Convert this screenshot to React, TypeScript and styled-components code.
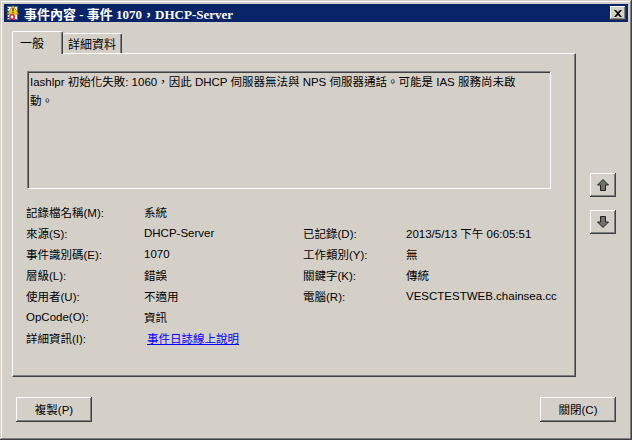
import React from "react";
import styled, { createGlobalStyle } from "styled-components";

const Global = createGlobalStyle`
  html, body { margin: 0; padding: 0; background: #d4d0c8; }
  * { box-sizing: border-box; }
`;

const Window = styled.div`
  width: 632px;
  height: 440px;
  padding: 4px;
  background: #d4d0c8;
  box-shadow: inset -1px -1px #404040, inset 1px 1px #d4d0c8,
    inset -2px -2px #808080, inset 2px 2px #ffffff;
  display: flex;
  flex-direction: column;
  font-family: "Liberation Sans", "Noto Sans CJK TC", sans-serif;
  font-size: 11.5px;
  color: #000;
`;

const TitleBar = styled.div`
  height: 18px;
  background: #0a246a;
  display: flex;
  align-items: center;
  padding: 0 2px 0 1px;
`;

const TitleText = styled.div`
  flex: 1;
  margin-left: 3px;
  color: #fff;
  font-family: "Liberation Serif", "Noto Sans CJK TC", serif;
  font-weight: bold;
  font-size: 13px;
  white-space: nowrap;
`;

const CloseButton = styled.div`
  width: 16px;
  height: 14px;
  background: #d4d0c8;
  box-shadow: inset -1px -1px #404040, inset 1px 1px #ffffff, inset -2px -2px #808080;
  display: flex;
  align-items: center;
  justify-content: center;
`;

const Body = styled.div`
  display: flex;
  padding: 9px 0 0 8px;
`;

const TabControl = styled.div`
  width: 564px;
  display: flex;
  flex-direction: column;
`;

const TabStrip = styled.div`
  height: 22px;
  display: flex;
  align-items: flex-end;
`;

const Tab = styled.div<{ $active?: boolean; $w: number }>`
  position: relative;
  z-index: ${(p) => (p.$active ? 2 : 1)};
  width: ${(p) => p.$w}px;
  height: ${(p) => (p.$active ? 23 : 20)}px;
  margin-bottom: ${(p) => (p.$active ? -1 : 0)}px;
  background: #d4d0c8;
  border-top: 1px solid #fff;
  border-left: ${(p) => (p.$active ? "1px solid #fff" : "none")};
  border-right: 1px solid #404040;
  border-top-left-radius: 2px;
  border-top-right-radius: 2px;
  box-shadow: inset -1px 0 #808080;
  display: flex;
  align-items: center;
  justify-content: ${(p) => (p.$active ? "flex-start" : "center")};
  padding-left: ${(p) => (p.$active ? 7 : 0)}px;
  padding-bottom: ${(p) => (p.$active ? 2 : 0)}px;
  font-size: 12px;
`;

const Panel = styled.div`
  height: 324px;
  border-top: 1px solid #fff;
  border-left: 1px solid #fff;
  border-right: 1px solid #404040;
  border-bottom: 1px solid #404040;
  box-shadow: inset -1px -1px #808080;
  padding: 17px 0 0 14px;
`;

const TextBox = styled.div`
  width: 524px;
  height: 118px;
  border-top: 1px solid #808080;
  border-left: 1px solid #808080;
  border-right: 1px solid #fff;
  border-bottom: 1px solid #fff;
  box-shadow: inset 1px 1px #404040, inset -1px -1px #d4d0c8;
  padding: 1px 2px 0 2px;
  line-height: 19px;
  white-space: nowrap;
`;

const FieldGrid = styled.div`
  margin: 12px 0 0 -1px;
  display: grid;
  grid-template-columns: 118px 159px 103px 1fr;
  grid-auto-rows: 21px;
  align-items: center;
  white-space: nowrap;
`;

const Cell = styled.div``;

const Link = styled.a`
  padding-left: 3px;
  color: #0000ff;
  text-decoration: underline;
  cursor: pointer;
`;

const ArrowColumn = styled.div`
  margin-left: 14px;
  padding-top: 142px;
  display: flex;
  flex-direction: column;
  gap: 13px;
`;

const RaisedButton = styled.div<{ $w: number; $h: number }>`
  width: ${(p) => p.$w}px;
  height: ${(p) => p.$h}px;
  background: #d4d0c8;
  box-shadow: inset -1px -1px #404040, inset 1px 1px #ffffff, inset -2px -2px #808080;
  display: flex;
  align-items: center;
  justify-content: center;
  font-size: 11.5px;
  padding-bottom: 1px;
`;

const ButtonRow = styled.div`
  margin-top: 20px;
  padding: 0 12px;
  display: flex;
  justify-content: space-between;
`;

const TitleIcon = () => (
  <svg width="16" height="16" viewBox="0 0 16 16">
    <rect x="2.5" y="1.5" width="10" height="13" fill="#f4f6fb" stroke="#4a6aa8" />
    <rect x="1" y="3" width="3" height="1" fill="#2c3f6e" />
    <rect x="1" y="6" width="3" height="1" fill="#2c3f6e" />
    <rect x="1" y="9" width="3" height="1" fill="#2c3f6e" />
    <rect x="1" y="12" width="3" height="1" fill="#2c3f6e" />
    <polygon points="8,0.5 13.5,9 2.5,9" fill="#f7d21c" stroke="#9a7a00" strokeWidth="0.8" />
    <rect x="7.5" y="3" width="1" height="3.5" fill="#000" />
    <rect x="7.5" y="7" width="1" height="1" fill="#000" />
    <circle cx="7" cy="12" r="3" fill="#e02020" />
    <circle cx="7" cy="12" r="1.4" fill="#fff" />
  </svg>
);

const CloseIcon = () => (
  <svg width="8" height="7" viewBox="0 0 8 7">
    <path d="M0 0h2l2 2 2-2h2L5 3.5 8 7H6L4 5 2 7H0l3-3.5z" fill="#000" />
  </svg>
);

const UpArrow = () => (
  <svg width="12" height="12" viewBox="0 0 12 12">
    <polygon points="6,0.5 11.5,6 8.5,6 8.5,11.5 3.5,11.5 3.5,6 0.5,6" fill="#707070" stroke="#202020" strokeWidth="1" />
  </svg>
);

const DownArrow = () => (
  <svg width="12" height="12" viewBox="0 0 12 12">
    <polygon points="6,11.5 11.5,6 8.5,6 8.5,0.5 3.5,0.5 3.5,6 0.5,6" fill="#707070" stroke="#202020" strokeWidth="1" />
  </svg>
);

const rows: [string, React.ReactNode, string, string][] = [
  ["記錄檔名稱(M):", "系統", "", ""],
  ["來源(S):", "DHCP-Server", "已記錄(D):", "2013/5/13 下午 06:05:51"],
  ["事件識別碼(E):", "1070", "工作類別(Y):", "無"],
  ["層級(L):", "錯誤", "關鍵字(K):", "傳統"],
  ["使用者(U):", "不適用", "電腦(R):", "VESCTESTWEB.chainsea.cc"],
  ["OpCode(O):", "資訊", "", ""],
  ["詳細資訊(I):", <Link key="l">事件日誌線上說明</Link>, "", ""],
];

export default function App() {
  return (
    <>
      <Global />
      <Window lang="zh-Hant-TW">
        <TitleBar>
          <TitleIcon />
          <TitleText>事件內容 - 事件 1070，DHCP-Server</TitleText>
          <CloseButton>
            <CloseIcon />
          </CloseButton>
        </TitleBar>
        <Body>
          <TabControl>
            <TabStrip>
              <Tab $active $w={51}>一般</Tab>
              <Tab $w={59}>詳細資料</Tab>
            </TabStrip>
            <Panel>
              <TextBox>
                Iashlpr 初始化失敗: 1060，因此 DHCP 伺服器無法與 NPS 伺服器通話。可能是 IAS 服務尚未啟
                <br />
                動。
              </TextBox>
              <FieldGrid>
                {rows.map((r, i) => (
                  <React.Fragment key={i}>
                    <Cell>{r[0]}</Cell>
                    <Cell>{r[1]}</Cell>
                    <Cell>{r[2]}</Cell>
                    <Cell>{r[3]}</Cell>
                  </React.Fragment>
                ))}
              </FieldGrid>
            </Panel>
          </TabControl>
          <ArrowColumn>
            <RaisedButton $w={26} $h={24}>
              <UpArrow />
            </RaisedButton>
            <RaisedButton $w={26} $h={24}>
              <DownArrow />
            </RaisedButton>
          </ArrowColumn>
        </Body>
        <ButtonRow>
          <RaisedButton $w={76} $h={25}>複製(P)</RaisedButton>
          <RaisedButton $w={76} $h={25}>關閉(C)</RaisedButton>
        </ButtonRow>
      </Window>
    </>
  );
}
